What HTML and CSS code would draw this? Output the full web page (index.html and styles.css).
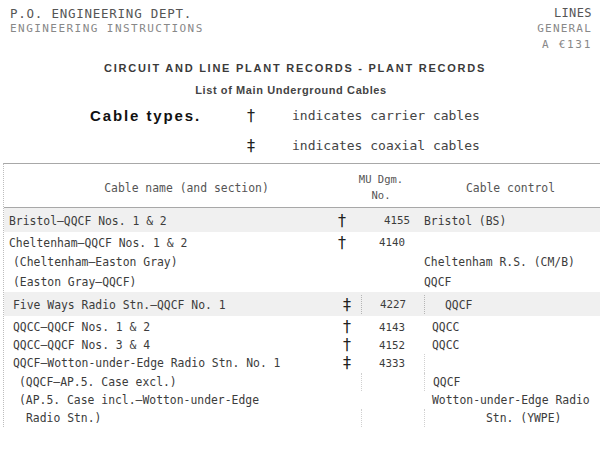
FILE: index.html
```html
<!DOCTYPE html>
<html>
<head>
<meta charset="utf-8">
<link rel="stylesheet" href="styles.css">
</head>
<body>
<div class="page">
  <header class="top">
    <div class="dept">
      <div class="dept-1">P.O. ENGINEERING DEPT.</div>
      <div class="dept-2">ENGINEERING INSTRUCTIONS</div>
    </div>
    <div class="ref">
      <div class="ref-1">LINES</div>
      <div class="ref-2">GENERAL</div>
      <div class="ref-3">A €131</div>
    </div>
  </header>

  <h1 class="title">CIRCUIT AND LINE PLANT RECORDS - PLANT RECORDS</h1>
  <h2 class="subtitle">List of Main Underground Cables</h2>

  <div class="types">
    <div class="types-label">Cable types.</div>
    <div class="mark">†</div>
    <div class="types-text">indicates carrier cables</div>
    <div></div>
    <div class="mark">‡</div>
    <div class="types-text">indicates coaxial cables</div>
  </div>

  <div class="table">
    <div class="thead">
      <div class="th th-name">Cable name (and section)</div>
      <div class="th th-mu">MU Dgm.<br>No.</div>
      <div class="th th-ctrl">Cable control</div>
    </div>

    <div class="block band">
      <div class="line">
        <div class="name">Bristol—QQCF Nos. 1 &amp; 2</div>
        <div class="sym sym-left">†</div>
        <div class="mu mu-wide">4155</div>
        <div class="ctrl ctrl-near">Bristol (BS)</div>
      </div>
    </div>

    <div class="block tall">
      <div class="line">
        <div class="name">Cheltenham—QQCF Nos. 1 &amp; 2</div>
        <div class="sym sym-left">†</div>
        <div class="mu">4140</div>
        <div class="ctrl"></div>
      </div>
      <div class="line">
        <div class="name in-1">(Cheltenham—Easton Gray)</div>
        <div class="sym"></div>
        <div class="mu"></div>
        <div class="ctrl ctrl-mid">Cheltenham R.S. (CM/B)</div>
      </div>
      <div class="line">
        <div class="name in-1">(Easton Gray—QQCF)</div>
        <div class="sym"></div>
        <div class="mu"></div>
        <div class="ctrl ctrl-mid">QQCF</div>
      </div>
    </div>

    <div class="block band">
      <div class="line">
        <div class="name in-1">Five Ways Radio Stn.—QQCF No. 1</div>
        <div class="sym">‡</div>
        <div class="mu dotted">4227</div>
        <div class="ctrl ctrl-far dotted">QQCF</div>
      </div>
    </div>

    <div class="block short">
      <div class="line">
        <div class="name in-1">QQCC—QQCF Nos. 1 &amp; 2</div>
        <div class="sym">†</div>
        <div class="mu">4143</div>
        <div class="ctrl">QQCC</div>
      </div>
      <div class="line">
        <div class="name in-1">QQCC—QQCF Nos. 3 &amp; 4</div>
        <div class="sym">†</div>
        <div class="mu">4152</div>
        <div class="ctrl">QQCC</div>
      </div>
      <div class="line">
        <div class="name in-1">QQCF—Wotton-under-Edge Radio Stn. No. 1</div>
        <div class="sym">‡</div>
        <div class="mu">4333</div>
        <div class="ctrl faint-dots"></div>
      </div>
      <div class="line">
        <div class="name in-2">(QQCF—AP.5. Case excl.)</div>
        <div class="sym"></div>
        <div class="mu faint-dots"></div>
        <div class="ctrl faint-dots">QQCF</div>
      </div>
      <div class="line">
        <div class="name in-2">(AP.5. Case incl.—Wotton-under-Edge</div>
        <div class="sym"></div>
        <div class="mu"></div>
        <div class="ctrl">Wotton-under-Edge Radio</div>
      </div>
      <div class="line">
        <div class="name in-3">Radio Stn.)</div>
        <div class="sym"></div>
        <div class="mu faint-dots"></div>
        <div class="ctrl ctrl-sub faint-dots">Stn. (YWPE)</div>
      </div>
    </div>
  </div>
</div>
</body>
</html>
```

FILE: styles.css
```css
html, body {
  margin: 0;
  padding: 0;
  background: #ffffff;
}

.page {
  width: 600px;
  height: 450px;
  overflow: hidden;
  color: #3c3c3c;
  font-family: "DejaVu Sans Mono", "Liberation Mono", monospace;
}

/* ---------- header ---------- */
.top {
  display: flex;
  justify-content: space-between;
  padding: 6px 8px 0 10px;
}

.dept-1 {
  font-size: 12.5px;
  line-height: 16px;
  letter-spacing: 0.75px;
  color: #555;
}

.dept-2 {
  font-size: 11px;
  line-height: 13px;
  letter-spacing: 1.45px;
  color: #888;
}

.ref {
  text-align: right;
  margin-top: -1px;
}

.ref-1 {
  font-size: 12px;
  line-height: 16px;
  letter-spacing: 0.4px;
  color: #555;
}

.ref-2 {
  font-size: 11px;
  line-height: 16px;
  letter-spacing: 1.2px;
  color: #888;
}

.ref-3 {
  font-size: 11px;
  line-height: 16px;
  letter-spacing: 1.7px;
  color: #888;
}

/* ---------- titles ---------- */
.title {
  margin: 7px 0 0 0;
  padding-right: 10px;
  text-align: center;
  font-family: "Liberation Sans", Arial, sans-serif;
  font-weight: bold;
  font-size: 11px;
  line-height: 16px;
  letter-spacing: 1.75px;
  color: #3a3a3a;
}

.subtitle {
  margin: 6px 0 0 0;
  padding-right: 18px;
  text-align: center;
  font-family: "Liberation Sans", Arial, sans-serif;
  font-weight: bold;
  font-size: 11px;
  line-height: 16px;
  letter-spacing: 0.6px;
  color: #444;
}

/* ---------- cable types legend ---------- */
.types {
  display: grid;
  grid-template-columns: 157px 45px 1fr;
  grid-auto-rows: 30px;
  align-items: center;
  padding-left: 90px;
  margin-top: 2px;
}

.types-label {
  font-family: "Liberation Sans", Arial, sans-serif;
  font-weight: bold;
  font-size: 15px;
  letter-spacing: 1.9px;
  color: #111;
}

.mark {
  font-family: "DejaVu Sans", sans-serif;
  font-size: 16px;
  color: #222;
}

.types-text {
  font-size: 13px;
  color: #444;
}

/* ---------- table ---------- */
.table {
  margin-top: 3px;
  border-top: 1px solid #a8a8a8;
  border-left: 1px dotted #bdbdbd;
  margin-left: 3px;
  font-size: 11.4px;
}

.thead {
  display: grid;
  grid-template-columns: 347px 60px 1fr;
  align-items: center;
  height: 43px;
  border-bottom: 1px solid #a8a8a8;
  color: #555;
}

.th {
  text-align: center;
  line-height: 16px;
}

.th-name {
  padding-left: 18px;
  padding-top: 4px;
}

.th-mu {
  padding-top: 2px;
  font-size: 10.5px;
}

.th-ctrl {
  padding-left: 10px;
  padding-top: 4px;
}

.block {
  display: flex;
  flex-direction: column;
}

.band {
  background: #f0f0f0;
  height: 24px;
  justify-content: center;
  padding-top: 1px;
  box-sizing: border-box;
}

.tall {
  padding-top: 1px;
  height: 60px;
  box-sizing: border-box;
}

.tall .line {
  height: 19.5px;
}

.short {
  padding-top: 2px;
}

.short .line {
  height: 18.2px;
}

.line {
  display: grid;
  grid-template-columns: 332px 25px 63px 1fr;
  align-items: center;
  height: 19px;
  white-space: nowrap;
}

.name {
  padding-left: 5px;
}

.in-1 { padding-left: 9px; }
.in-2 { padding-left: 15px; }
.in-3 { padding-left: 22px; }

.sym {
  font-family: "DejaVu Sans", sans-serif;
  font-size: 16px;
  color: #222;
  padding-left: 7px;
  line-height: 14px;
}

.sym-left {
  padding-left: 2px;
}

.mu {
  padding-left: 18px;
  align-self: stretch;
  display: flex;
  align-items: center;
  font-size: 10.8px;
}

.mu-wide {
  padding-left: 23px;
}

.ctrl {
  padding-left: 8px;
  align-self: stretch;
  display: flex;
  align-items: center;
}

.ctrl-near { padding-left: 0; }
.ctrl-mid { padding-left: 0; }
.ctrl-far { padding-left: 20px; }
.ctrl-sub { padding-left: 61px; }

.dotted {
  border-left: 1px dotted #b5b5b5;
}

.faint-dots {
  border-left: 1px dotted #d0d0d0;
}
```
